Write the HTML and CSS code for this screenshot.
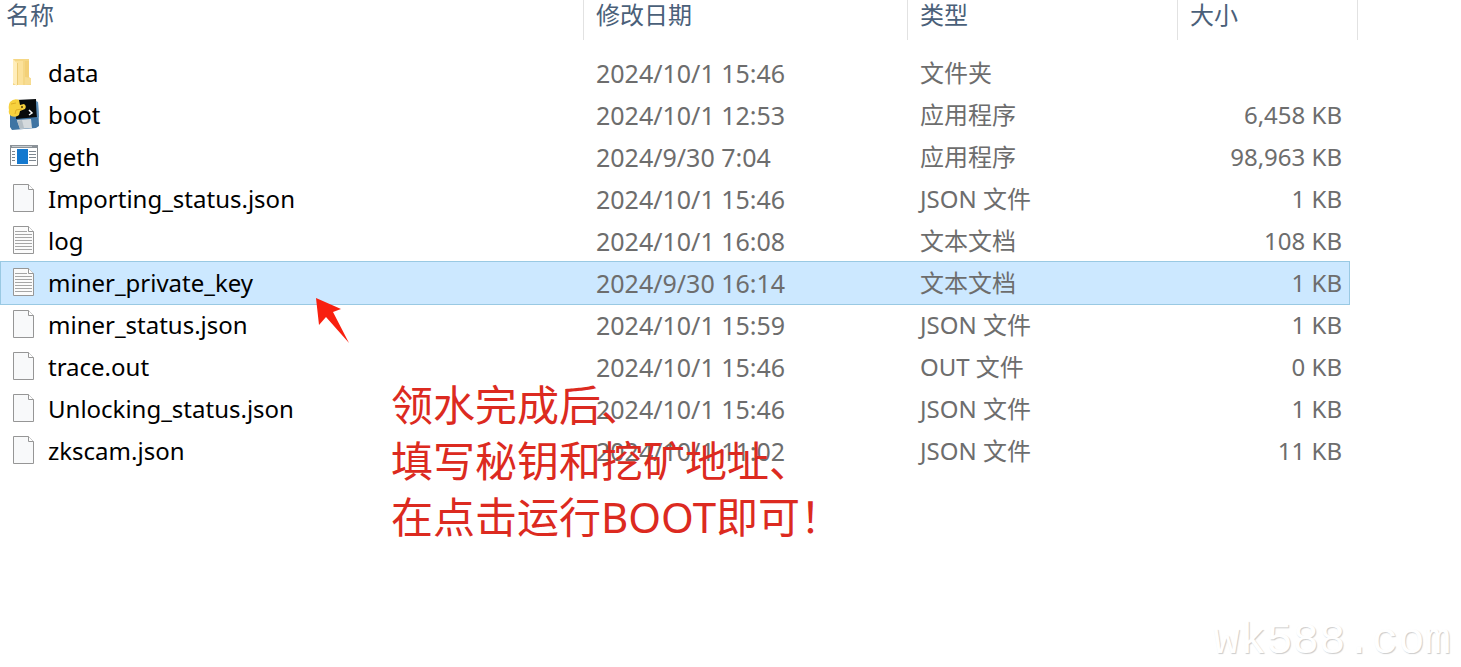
FILE: index.html
```html
<!DOCTYPE html>
<html lang="zh-CN">
<head>
  <meta charset="UTF-8" />
  <title>文件列表</title>
  <link rel="stylesheet" href="styles.css">
</head>
<body>

  <svg class="symbols" aria-hidden="true">
    <symbol id="icon-file" viewBox="0 0 22 28">
      <path d="M.5.5h15l5 5v22H.5z" fill="#f8f9fa" stroke="#969696"/>
      <path d="M15.5.5v5h5" fill="#fff" stroke="#969696"/>
    </symbol>
    <symbol id="icon-text" viewBox="0 0 22 28">
      <path d="M.5.5h15l5 5v22H.5z" fill="#fbfbfb" stroke="#969696"/>
      <path d="M15.5.5v5h5" fill="#fff" stroke="#969696"/>
      <path d="M2 5.500h12M2 8.500h17M2 11.500h17M2 14.500h17M2 17.500h17M2 20.500h17M2 23.500h17" stroke="#a6a6a6"/>
    </symbol>
  </svg>

  <table class="files">
    <colgroup>
      <col class="col-name">
      <col class="col-date">
      <col class="col-type">
      <col class="col-size">
      <col class="col-gap">
      <col class="col-rest">
    </colgroup>
    <thead>
      <tr>
        <th>名称</th>
        <th>修改日期</th>
        <th>类型</th>
        <th colspan="2">大小</th>
      </tr>
    </thead>
    <tbody>
      <tr>
        <td>
          <div class="name">
            <svg class="icon" viewBox="0 0 32 32">
              <path d="M5 2h16v18l2 2v6H5z" fill="#f5d785"/>
              <path d="M8 4h7v24H8z" fill="#fbe19a"/>
              <path d="M17 4h4v17h-4z" fill="#f3d077"/>
              <path d="M17 20l6 1v6l-6 1z" fill="#f7dc92"/>
              <path d="M5 2l4 4v23l-4-3z" fill="#ffedba"/>
              <path d="M9.500 6v22" stroke="#eccb74"/>
            </svg>
            data
          </div>
        </td>
        <td>2024/10/1 15:46</td>
        <td>文件夹</td>
        <td></td>
      </tr>
      <tr>
        <td>
          <div class="name">
            <svg class="icon" viewBox="0 0 32 32">
              <path d="M2 15l28-12 1 24-3 2-24 2-2-3z" fill="#3f74a3"/>
              <path d="M8 1l20-1 1 18-21 2z" fill="#080b0d"/>
              <path d="M28 2l2 1 1 15-2 1z" fill="#5e8fb9"/>
              <path d="M9 21l14-1 1 9-12 1z" fill="#d5dadd"/>
              <path d="M9 22l5-1 2 8-4 1z" fill="#b4bec5"/>
              <path d="M2 3q4-4 9-2l1 5 4-1q3 2 1 5l-5 2-1 4q-3 3-8 1-3-2-2-6-1-5 1-8z" fill="#f7d13e"/>
              <path d="M3 5l5-1M7 15l1-4 6-1" fill="none" stroke="#dfad24"/>
              <circle cx="14" cy="8" r="1" fill="#4b3b0c"/>
              <path d="M21 11l3 3-3 2" fill="none" stroke="#fff" stroke-width="1.5"/>
            </svg>
            boot
          </div>
        </td>
        <td>2024/10/1 12:53</td>
        <td>应用程序</td>
        <td>6,458 KB</td>
      </tr>
      <tr>
        <td>
          <div class="name">
            <svg class="icon" viewBox="0 0 32 32">
              <path d="M2.500 5.500h27v19h-27z" fill="#fff" stroke="#85898c"/>
              <path d="M2 4h28v3H2z" fill="#8b9298"/>
              <path d="M4 5.500h20" stroke="#c5cace"/>
              <path d="M9 8h11v15H9z" fill="#1479cf"/>
              <path d="M4 10.500h3M4 13.500h3M4 16.500h3M4 19.500h3M21 10.500h7M21 13.500h7M21 16.500h7M21 19.500h7" stroke="#7d8790"/>
            </svg>
            geth
          </div>
        </td>
        <td>2024/9/30 7:04</td>
        <td>应用程序</td>
        <td>98,963 KB</td>
      </tr>
      <tr>
        <td><div class="name"><svg class="icon doc"><use href="#icon-file"/></svg>Importing_status.json</div></td>
        <td>2024/10/1 15:46</td>
        <td>JSON 文件</td>
        <td>1 KB</td>
      </tr>
      <tr>
        <td><div class="name"><svg class="icon doc"><use href="#icon-text"/></svg>log</div></td>
        <td>2024/10/1 16:08</td>
        <td>文本文档</td>
        <td>108 KB</td>
      </tr>
      <tr class="selected">
        <td><div class="name"><svg class="icon doc"><use href="#icon-text"/></svg>miner_private_key</div></td>
        <td>2024/9/30 16:14</td>
        <td>文本文档</td>
        <td>1 KB</td>
      </tr>
      <tr>
        <td><div class="name"><svg class="icon doc"><use href="#icon-file"/></svg>miner_status.json</div></td>
        <td>2024/10/1 15:59</td>
        <td>JSON 文件</td>
        <td>1 KB</td>
      </tr>
      <tr>
        <td><div class="name"><svg class="icon doc"><use href="#icon-file"/></svg>trace.out</div></td>
        <td>2024/10/1 15:46</td>
        <td>OUT 文件</td>
        <td>0 KB</td>
      </tr>
      <tr>
        <td><div class="name"><svg class="icon doc"><use href="#icon-file"/></svg>Unlocking_status.json</div></td>
        <td>2024/10/1 15:46</td>
        <td>JSON 文件</td>
        <td>1 KB</td>
      </tr>
      <tr>
        <td><div class="name"><svg class="icon doc"><use href="#icon-file"/></svg>zkscam.json</div></td>
        <td>2024/10/1 11:02</td>
        <td>JSON 文件</td>
        <td>11 KB</td>
      </tr>
    </tbody>
  </table>

  <svg class="arrow" viewBox="0 0 36 46" aria-hidden="true">
    <path d="M1 0l25 11-8 3 16 31L11 19l-7 8z" fill="#f8200f"/>
  </svg>

  <p class="note">领水完成后、<br>填写秘钥和挖矿地址、<br>在点击运行BOOT即可！</p>

  <div class="watermark">wk588.com</div>

</body>
</html>
```

FILE: styles.css
```css
* {
  box-sizing: border-box;
}

body {
  position: relative;
  min-height: 100vh;
  margin: 0;
  background: #fff;
  color: #6d6d6d;
  font-family: "Noto Sans", "Noto Sans CJK SC", sans-serif;
  font-size: 24px;
  line-height: 32px;
}

.symbols {
  display: none;
}

/* file list */
.files {
  width: 100%;
  table-layout: fixed;
  border-collapse: separate;
  border-spacing: 0;
}

.col-date {
  width: 324px;
}

.col-type {
  width: 270px;
}

.col-size {
  width: 172px;
}

.col-gap {
  width: 8px;
}

.col-rest {
  width: 103px;
}

th {
  height: 40px;
  padding: 0 12px 10px;
  border-right: 1px solid #e2e2e2;
  color: #4a6079;
  font-weight: 400;
  line-height: 30px;
  text-align: left;
}

th:first-child {
  padding-left: 6px;
}

/* space between the header and the first row */
tbody::before {
  content: "";
  display: table-row;
  height: 12px;
}

td {
  height: 42px;
  padding: 0 12px;
  border: 0 solid #99c9e3;
  white-space: nowrap;
}

td:first-child {
  padding-left: 8px;
  color: #000;
}

td:nth-child(2) {
  font-size: 25px;
}

td:nth-child(4) {
  padding-right: 8px;
  text-align: right;
}

.selected td {
  background: #cce8ff;
  box-shadow: 0 -1px #99c9e3, 0 1px #99c9e3;
}

.selected td:first-child {
  padding-left: 7px;
  border-left-width: 1px;
}

.selected td:last-child {
  padding-right: 7px;
  border-right-width: 1px;
}

.name {
  display: flex;
  align-items: center;
  gap: 8px;
}

.icon {
  flex: none;
  width: 32px;
  height: 32px;
}

.doc {
  padding: 1px 5px 3px;
}

/* marks over the list */
.arrow {
  position: absolute;
  top: 298px;
  left: 315px;
  width: 36px;
  height: 46px;
}

.note {
  position: absolute;
  top: 377px;
  left: 391px;
  margin: 0;
  color: #dc2a20;
  font-size: 42px;
  line-height: 56px;
  white-space: nowrap;
}

.watermark {
  position: absolute;
  right: 10px;
  bottom: 4px;
  color: #fff;
  font-family: "Liberation Mono", monospace;
  font-size: 44px;
  line-height: 44px;
  text-shadow: 1px 1px 1px #ccc;
}
```
